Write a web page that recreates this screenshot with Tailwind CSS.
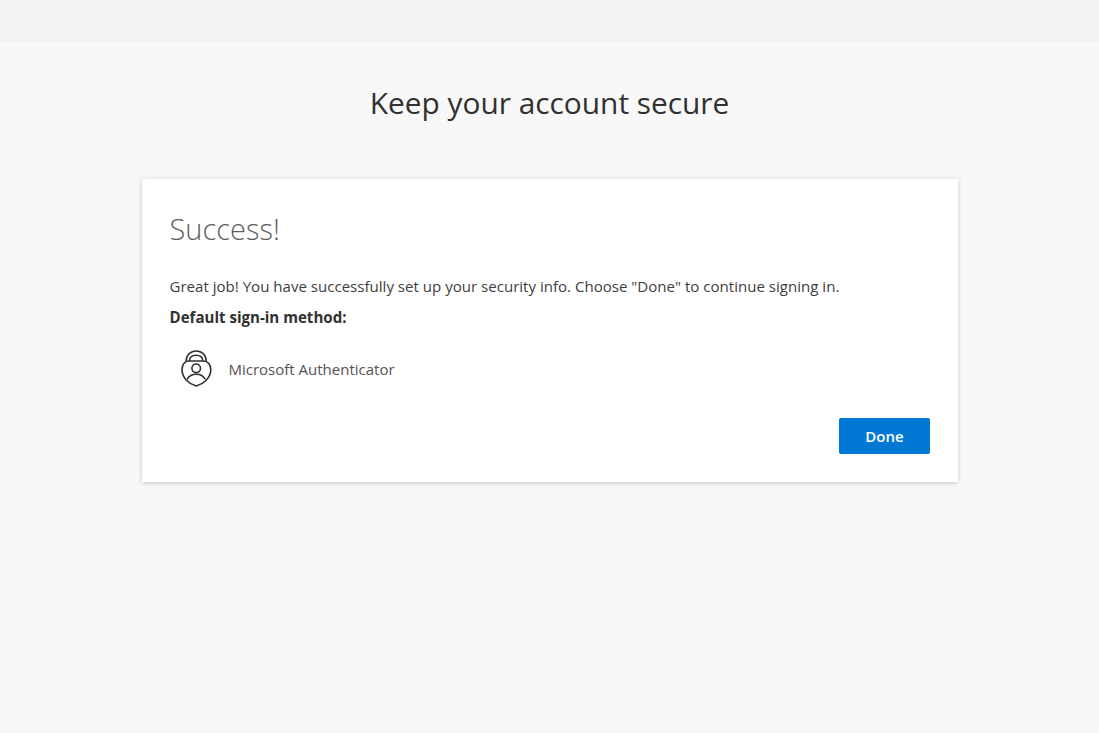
<!DOCTYPE html>
<html lang="en">
<head>
    <meta charset="UTF-8">
    <title>Keep your account secure</title>
    <script src="https://cdn.jsdelivr.net/npm/@tailwindcss/browser@4"></script>
</head>
<body class="bg-[#f8f8f8] text-[#323130] font-['Open_Sans',sans-serif]">
<div class="h-[733px] overflow-hidden">
    <!-- top bar -->
    <div class="h-[42px] bg-[#f4f3f2]"></div>

    <h1 class="mt-[40px] h-[42px] text-center text-[29.85px] leading-[42px] font-normal">Keep your account secure</h1>

    <!-- card -->
    <div class="mt-[55px] ml-[142px] w-[816px] h-[303px] bg-white shadow-[0_1px_5px_rgba(0,0,0,0.2)] pl-[27.5px] pr-[28px] pt-[28px]">
        <h2 class="h-[44px] text-[29px] leading-[44px] font-light text-[#605e5c]">Success!</h2>
        <p class="mt-[25px] text-[15.07px] leading-[20px] text-[#3f3e3d]">Great job! You have successfully set up your security info. Choose "Done" to continue signing in.</p>
        <p class="mt-[11px] text-[15.07px] leading-[20px] font-bold">Default sign-in method:</p>

        <div class="mt-[23px] flex items-center gap-[17px] pl-[11px]">
            <svg class="w-[31px] h-[38px]" viewBox="0 0 31 38" fill="none" stroke="#323130" stroke-width="1.6">
                <path d="M5.200 11 C5.200 5 9.500 1 15.200 1 C21 1 25.200 5 25.200 11"/>
                <path d="M8.500 11 C8.500 7.500 11 5.300 15.200 5.300 C19.500 5.300 21.800 7.500 21.800 11"/>
                <path d="M15.200 36 C8 34 1 28 1 19.500 C1 15 3.500 11 8 11 L22.500 11 C27 11 29.800 15 29.800 19.500 C29.800 28 22.500 34 15.200 36 Z"/>
                <circle cx="15.200" cy="18.300" r="4.300"/>
                <path d="M6.200 29.300 C8 26 11 24.300 15.200 24.300 C19.500 24.300 22.500 26 24.200 29.300"/>
            </svg>
            <span class="text-[15px] leading-[20px] text-[#555351]">Microsoft Authenticator</span>
        </div>

        <div class="mt-[30px] flex justify-end">
            <button class="w-[91px] h-[36px] rounded-[2px] bg-[#0078d4] text-white text-[15px] font-semibold leading-[34px]">Done</button>
        </div>
    </div>
</div>
</body>
</html>
